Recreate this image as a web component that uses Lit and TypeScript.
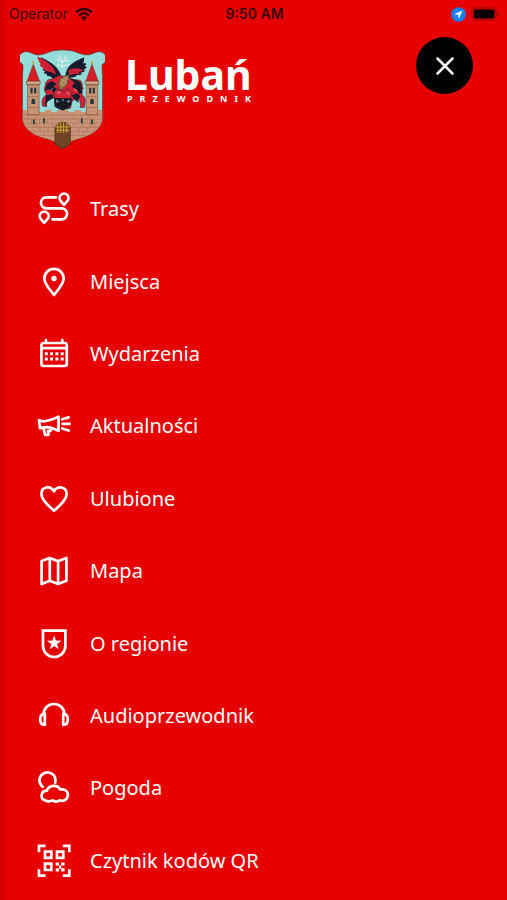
import { LitElement, html, svg, css } from "lit";
import { customElement } from "lit/decorators.js";

const pin = (x: number, y: number) => svg`
  <path transform="translate(${x} ${y})" d="M0 6.600L-3.200 3A4.500 4.500 0 1 1 3.200 3z"></path>`;

const icons = {
  routes: svg`
    <path d="M20 6.400H10.400a5.400 5.400 0 0 0 0 10.900h15.200a5.500 5.500 0 0 1 0 11H16.400"></path>
    ${pin(28, 7.2)}${pin(8.2, 25.2)}`,
  place: svg`
    <path d="M18 31C15 26.600 8.300 20.600 8.300 14.600a9.700 9.700 0 0 1 19.400 0C27.700 20.600 21 26.600 18 31z"></path>
    <circle class="solid" cx="18" cy="14.500" r="2.700"></circle>`,
  calendar: svg`
    <rect x="5.400" y="7" width="25.400" height="23" rx="2.500"></rect>
    <path d="M5.400 12.200h25.400M10 4.200V7M26.300 4.200V7"></path>
    <path class="solid" d="M8.800 16.200h3v3h-3zM14.100 16.200h3v3h-3zM19.400 16.200h3v3h-3zM24.700 16.200h3v3h-3zM8.800 21.500h3v3h-3zM14.100 21.500h3v3h-3zM19.400 21.500h3v3h-3zM24.700 21.500h3v3h-3z"></path>`,
  news: svg`
    <path d="M3 12.200l3.500 1.100c5.500-.2 10.500-2 16-4.700v14.200c-4.500-2.300-8-3.700-12-3.700L4 20.200z"></path>
    <path d="M7.400 19.500l1.600 7.300h3.600l-.7-4h2.700v-3M26.200 11.300l6.400-1.900M26.500 15.800h7.200M26.200 20.500l6.400 2"></path>`,
  heart: svg`
    <path d="M18 29.900C13 25 5.400 19.300 5.400 12.900c0-7.200 8.900-9 12.600-2.600 3.700-6.400 12.600-4.600 12.600 2.600C30.600 19.300 23 25 18 29.900z"></path>`,
  map: svg`
    <path d="M5.600 8.100L13.800 5l8.300 3.200L30.400 5v22.800L22.100 31l-8.300-3.200L5.600 31zM13.800 5v22.800M22.100 8.200V31"></path>`,
  region: svg`
    <path stroke-linejoin="miter" d="M7 4.600h22.400v15.200a11.200 11.200 0 0 1-22.400 0z"></path>
    <path class="solid" d="M18.200 9.400l1.750 5.200 5.500.1-4.400 3.300 1.600 5.200-4.450-3.100-4.450 3.100 1.600-5.200-4.400-3.300 5.500-.1z"></path>`,
  audio: svg`
    <path d="M7.600 16.500C7.600 10.500 12 6 18 6s10.400 4.500 10.400 10.500"></path>
    <path d="M8.800 15.900v11C6 26.900 4.200 24.800 4.200 21.500s1.800-5.500 4.600-5.600zM27.200 15.900v11c2.800 0 4.600-2.100 4.600-5.400s-1.800-5.500-4.600-5.600z"></path>`,
  weather: svg`
    <path d="M6.600 16.700a8 8 0 1 1 12.900-6.300l-.3 2.200"></path>
    <path d="M9.300 30.400C3.500 28.600 4.800 20.700 11 20.700c1.600-5.800 10.600-6.600 13-1.200 5-.8 7.900 1.700 7.900 5.300 0 4.500-4 7-8.300 5.600-2.500 1.600-5 1.500-6.800 0-2.500 1.200-5.500.9-7.500 0z"></path>`,
  qr: svg`
    <g stroke-linejoin="miter" stroke-linecap="butt">
      <path d="M3 9.300V2.800h6.500M26.800 2.800h6.500v6.500M33.300 26.200v6.500h-6.500M9.500 32.700H3v-6.500"></path>
      <path d="M9 8.600h6.300v6.300H9zM21 8.600h6.300v6.300H21zM9 20.700h6.300V27H9z"></path>
    </g>
    <path class="solid" d="M19.700 19.400h3.400v3.200h-3.400zM25.200 19.400h3.400v3.200h-3.400zM23 22.500h2.300v3.200H23zM19.700 25.500h3.400v3h-3.400zM25.200 25.200h3.400v3.300h-3.400z"></path>`,
};

const items: [string, unknown][] = [
  ["Trasy", icons.routes],
  ["Miejsca", icons.place],
  ["Wydarzenia", icons.calendar],
  ["Aktualności", icons.news],
  ["Ulubione", icons.heart],
  ["Mapa", icons.map],
  ["O regionie", icons.region],
  ["Audioprzewodnik", icons.audio],
  ["Pogoda", icons.weather],
  ["Czytnik kodów QR", icons.qr],
];

// One tower of the town wall, drawn around its own centre line.
const tower = (x: number) => svg`
  <g transform="translate(${x} 0)">
    <path fill="#c99376" stroke="#5e4038" stroke-width="1.500" d="M-16 135h32v90h-32z"></path>
    <path fill="#d5aa86" stroke="#54382f" stroke-width="1.500" d="M-19 126h38v10h-38z"></path>
    <path fill="#d51d26" stroke="#6b3430" stroke-width="1.500" d="M0 76l17 50h-34z"></path>
    <path stroke="#c9a13c" stroke-width="3" d="M0 67v12"></path>
    <circle cx="0" cy="71" r="3" fill="#c9a13c"></circle>
    <path fill="#263a3a" d="M-8 146h6v17h-6zM2 146h6v17H2zM-5 182q5-9 10 0v12H-5z"></path>
    <path stroke="#8c5b49" stroke-width="1.500" d="M-16 172h32M-16 204h32M-16 140h32"></path>
  </g>`;

@customElement("app-root")
export class AppRoot extends LitElement {
  static styles = css`
    :host {
      display: flex;
      flex-direction: column;
      box-sizing: border-box;
      min-height: 100vh;
      padding-bottom: 3px;
      color: #fff;
      background: linear-gradient(90deg, #d20000, #e60000 8px);
      font-family: "Noto Sans", "Open Sans", sans-serif;
    }
    svg { display: block; fill: none; }
    .status {
      display: grid;
      grid-template-columns: 1fr auto 1fr;
      align-items: center;
      height: 28px;
      padding: 0 7px 0 9px;
      color: #3a0000;
      font: 14px/20px Inter, "Liberation Sans", sans-serif;
    }
    .carrier, .power { display: flex; align-items: center; gap: 7px; }
    .power { justify-content: flex-end; gap: 5px; }
    .time { font-weight: 600; }
    header {
      display: flex;
      align-items: flex-start;
      box-sizing: border-box;
      height: 145px;
      padding: 9px 34px 0 20px;
    }
    .crest { flex: none; margin-top: 12px; }
    .brand { flex: 1; margin: 16px 0 0 20px; }
    h1 { margin: 0; font-size: 41px; line-height: 42px; font-weight: 700; }
    .sub {
      margin: 0 2px;
      font-size: 9px;
      line-height: 8px;
      font-weight: 700;
      letter-spacing: 7px;
    }
    .close {
      display: grid;
      place-items: center;
      width: 57px;
      height: 57px;
      padding: 0;
      border: 0;
      border-radius: 50%;
      background: #000;
      cursor: pointer;
    }
    nav { display: flex; flex: 1; }
    ul {
      display: grid;
      flex: 1;
      grid-auto-rows: minmax(56px, 1fr);
      margin: 0;
      padding: 0;
      list-style: none;
    }
    li { display: grid; }
    a {
      display: flex;
      align-items: center;
      gap: 18px;
      padding: 0 36px;
      color: inherit;
      font-size: 20px;
      line-height: 28px;
      text-decoration: none;
    }
    .icon {
      flex: none;
      stroke: #fff;
      stroke-width: 2.7;
      stroke-linejoin: round;
      stroke-linecap: round;
    }
    .solid { fill: #fff; stroke: none; }
  `;

  render() {
    return html`
      <div class="status">
        <div class="carrier">
          <span>Operator</span>
          <svg width="18" height="14" viewBox="0 0 18 14" stroke="#3a0000" stroke-width="2.400" aria-hidden="true">
            <path d="M1 5.200c4.600-4.300 11.400-4.300 16 0M3.900 8.300c3-2.700 7.200-2.700 10.200 0"></path>
            <path fill="#3a0000" stroke="none" d="M5.900 10.500c1.800-1.600 4.400-1.600 6.200 0L9 13.700z"></path>
          </svg>
        </div>
        <span class="time">9:50 AM</span>
        <div class="power">
          <svg width="15" height="15" viewBox="0 0 15 15" aria-hidden="true">
            <circle cx="7.500" cy="7.500" r="7.300" fill="#147efb"></circle>
            <path fill="#fff" d="M11.600 3.400L3 7.300l4.200.5.500 4.200z"></path>
          </svg>
          <svg width="29" height="14" viewBox="0 0 29 14" aria-hidden="true">
            <rect x="1" y="1" width="24" height="12" rx="3.500" stroke="#8e0000"></rect>
            <rect x="2.800" y="2.500" width="20.600" height="9" rx="2" fill="#000"></rect>
            <path fill="#8e0000" d="M26.500 5v4c2-.8 2-3.200 0-4z"></path>
          </svg>
        </div>
      </div>
      <header>
        <svg class="crest" width="85" height="100" viewBox="38 32 236 294" preserveAspectRatio="none" role="img" aria-label="Herb Lubania">
          <path fill="#93dcd8" stroke="#574444" stroke-width="2" d="M52 40c16-2 24 12 43 9 17-2 24-14 61-14s45 12 62 14c19 3 27-11 43-9 18 4 24 26 6 37-3 6 0 22 0 40v116c0 35-33 53-65 62-23 6-38 15-46 24-8-9-23-18-46-24-32-9-65-27-65-62V117c0-18 3-34 0-40-18-11-12-33 7-37z"></path>
          <path fill="#c99376" d="M46 211h45v6h16v-6h18v6h16v-6h32v6h16v-6h18v6h16v-6h43v23c0 34-32 52-64 61-23 6-38 15-46 24-8-9-23-18-46-24-32-9-64-27-64-61z"></path>
          <path stroke="#a26c58" stroke-width="1.500" d="M46 226h220M46 238h220M49 250h214M56 262h200M67 274h178M87 286h138M60 226v12M82 226v12M104 226v12M126 226v12M188 226v12M210 226v12M232 226v12M70 238v12M92 238v12M114 238v12M200 238v12M222 238v12M244 238v12M84 250v12M106 250v12M128 250v12M190 250v12M212 250v12M234 250v12M94 262v12M116 262v12M202 262v12M224 262v12M106 274v12M214 274v12"></path>
          ${tower(75)}${tower(238)}
          <path fill="#22383b" d="M74 239h5v14h-5zM102 236h5v14h-5zM207 236h5v14h-5zM235 239h5v14h-5z"></path>
          <path fill="#704327" stroke="#4b3024" stroke-width="2" d="M135 311v-50q21-29 43 0v50l-22 15z"></path>
          <path stroke="#c6a23a" stroke-width="3" d="M136 261h41M138 271h37M143 252v27M151 247v32M159 247v32M168 251v28"></path>
          <path fill="#171c2c" d="M152 110c-8-25-24-38-56-54 2 10 1 15 3 20 5 5 2 9 8 14-9 0-7 5 1 8-6 3-4 7 5 7-4 6 5 9 12 7-4 8 15 10 27 5z"></path>
          <path fill="#cc2038" d="M86 54c3 12 5 16 9 22-4 4 1 9 9 12-4 5 4 9 12 10 8 2 15 5 22 10-2-22-22-40-52-54z"></path>
          <path fill="#171c2c" d="M164 110c3-27 19-40 53-54-3 8 1 12-5 18 13-2 12 3 5 8 9 2 6 8-3 10 9 3 2 9-8 9 7 6-2 9-11 7 3 7-14 9-31 8z"></path>
          <path fill="#cc2038" d="M171 95q20-13 44 0-19 4-12 12-14-5-26 3z"></path>
          <g stroke="#e8efed" stroke-width="3" stroke-linecap="round">
            <path d="M155 87V61M155 71l-13-13M155 73l16-16M149 64l-8 2M162 65l11 3M153 82l-12-4M159 81l15-4M151 58l-3-7M161 59l5-8"></path>
          </g>
          <path fill="#d42035" stroke="#442d37" stroke-width="2" d="M125 121l23-11 17 3 22 9 18 2c9 10 4 17 9 25-7 5-5 15-2 20 12 9 6 21 5 34l-12 1c4-14-1-22-9-28l-13 9-5 21-13 2-8-20-11 18-11-4-1-24-14-10c-8 9-12 18-7 33l-12-1c-4-15-1-26 10-33-2-10-9-15-3-26 1-12 5-20 17-20z"></path>
          <path fill="#171c2c" d="M125 126l14 8-8 9 12 8-9 8-18-9-9 8 5-22zM176 119l14 13-9 11 15 8 7 14 9-4-5-30-12-8zM110 169l18-5 3 12-16 10-8 14zM181 169l16-7 9 10-7 9 4 13-15-15z"></path>
          <path fill="#a28155" stroke="#393d34" stroke-width="2" d="M150 119l25-13-6 29-17 18c-10-16-7-23-2-34z"></path>
          <path stroke="#dfb17d" stroke-width="2" d="M154 122l15 10M151 131l12 9M159 113l14 9"></path>
          <path fill="#cf2438" stroke="#39242d" stroke-width="2" d="M132 158l11-9 14 9 15-9 11 9-4 20h-44z"></path>
          <path fill="#151a25" d="M133 176l49 1-2 19c-4 9-14 13-23 17-11-4-21-8-23-18z"></path>
          <path fill="#78909c" d="M139 180l9 7-10 3zM175 180l-9 7 10 3zM154 180l3 7 4-7z"></path>
          <path stroke="#efd8d0" stroke-width="2" d="M128 148l-5 7M190 149l5 8M142 163l9-5M168 160l7 6M119 192l-4 8M201 187l-3 9"></path>
        </svg>
        <div class="brand">
          <h1>Lubań</h1>
          <p class="sub">PRZEWODNIK</p>
        </div>
        <button class="close" type="button" aria-label="Zamknij menu">
          <svg width="20" height="20" viewBox="0 0 20 20" stroke="#fff" stroke-width="2.500" stroke-linecap="round">
            <path d="M2.500 2.500l15 15M17.500 2.500l-15 15"></path>
          </svg>
        </button>
      </header>
      <nav aria-label="Menu">
        <ul>
          ${items.map(([label, icon]) => html`
            <li>
              <a href="#">
                <svg class="icon" width="36" height="36" viewBox="0 0 36 36" aria-hidden="true">${icon}</svg>
                <span>${label}</span>
              </a>
            </li>`)}
        </ul>
      </nav>
    `;
  }
}
